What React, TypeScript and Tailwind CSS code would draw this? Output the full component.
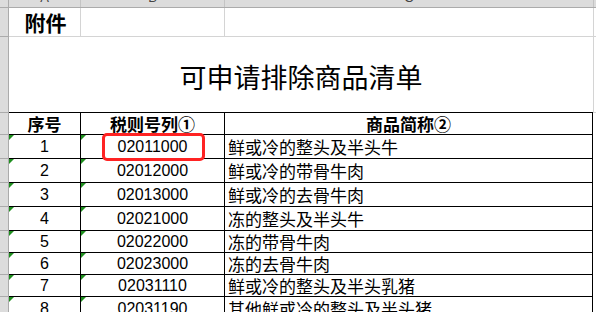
import React from 'react'

const cjk = "font-['Noto_Sans_CJK_SC',sans-serif]"
const num = "font-['Liberation_Sans','Noto_Sans_CJK_SC',sans-serif]"

const rows = [
  { h: 'h-[24px]', no: '1', code: '02011000', name: '鲜或冷的整头及半头牛' },
  { h: 'h-[24px]', no: '2', code: '02012000', name: '鲜或冷的带骨牛肉' },
  { h: 'h-[24px]', no: '3', code: '02013000', name: '鲜或冷的去骨牛肉' },
  { h: 'h-[24px]', no: '4', code: '02021000', name: '冻的整头及半头牛' },
  { h: 'h-[22px]', no: '5', code: '02022000', name: '冻的带骨牛肉' },
  { h: 'h-[22px]', no: '6', code: '02023000', name: '冻的去骨牛肉' },
  { h: 'h-[22px]', no: '7', code: '02031110', name: '鲜或冷的整头及半头乳猪' },
  { h: 'h-[24px]', no: '8', code: '02031190', name: '其他鲜或冷的整头及半头猪' },
]

function Flag() {
  return <span className="absolute left-0 top-0 border-t-[5px] border-r-[5px] border-t-[#1f8f1f] border-r-transparent" />
}

function RowHead() {
  return <div className="w-[9px] shrink-0 bg-[#dcdcdc] border-r border-b border-[#ababab]" />
}

export default function App() {
  return (
    <div className="relative w-[596px] h-[312px] overflow-hidden bg-white text-black">
      {/* column letters, cut off at the top */}
      <div className="flex h-[8px] bg-[#dcdcdc] border-b border-[#ababab] overflow-hidden font-['Liberation_Sans',sans-serif] text-[13px] leading-[13px] text-[#444]">
        <div className="w-[9px] shrink-0 border-r border-[#ababab]" />
        <div className="w-[72px] shrink-0 border-r border-[#c4c4c4] text-center"><span className="block -mt-[9px]">A</span></div>
        <div className="w-[144px] shrink-0 border-r border-[#c4c4c4] text-center"><span className="block -mt-[9px]">B</span></div>
        <div className="w-[369px] shrink-0 border-r border-[#c4c4c4] text-center"><span className="block -mt-[9px]">C</span></div>
        <div className="flex-1" />
      </div>

      {/* 附件 */}
      <div className="flex h-[29px]">
        <RowHead />
        <div className={`w-[72px] shrink-0 border-r border-b border-[#d4d4d4] flex items-center justify-center pl-[2px] ${cjk} text-[21px] leading-[24px] font-bold`}>附件</div>
        <div className="w-[144px] shrink-0 border-r border-b border-[#d4d4d4]" />
        <div className="w-[369px] shrink-0 border-r border-b border-[#d4d4d4]" />
        <div className="flex-1 border-b border-[#d4d4d4]" />
      </div>

      {/* title */}
      <div className="flex h-[76px]">
        <RowHead />
        <div className={`w-[584px] shrink-0 border-b border-black flex items-center justify-center pt-[5px] ${cjk} text-[27px] leading-[32px]`}>可申请排除商品清单</div>
        <div className="w-px shrink-0 bg-[#d4d4d4] border-b border-[#d4d4d4]" />
        <div className="flex-1 border-b border-[#d4d4d4]" />
      </div>

      {/* table head */}
      <div className={`flex h-[22px] ${cjk} text-[17px] leading-[20px] font-bold`}>
        <RowHead />
        <div className="w-[72px] shrink-0 border-r border-b border-black flex items-center justify-center">序号</div>
        <div className="w-[144px] shrink-0 border-r border-b border-black flex items-center justify-center">税则号列①</div>
        <div className="w-[368px] shrink-0 border-r border-b border-black flex items-center justify-center">商品简称②</div>
        <div className="flex-1" />
      </div>

      {rows.map((r) => (
        <div key={r.no} className={`flex ${r.h}`}>
          <RowHead />
          <div className={`relative w-[72px] shrink-0 border-r border-b border-black flex items-center justify-center pt-[1px] ${num} text-[16px] leading-[18px]`}>
            <Flag />
            {r.no}
          </div>
          <div className={`relative w-[144px] shrink-0 border-r border-b border-black flex items-center justify-center pt-[1px] ${num} text-[16px] leading-[18px]`}>
            <Flag />
            {r.code}
          </div>
          <div className={`w-[368px] shrink-0 border-r border-b border-black flex items-center pl-[3px] ${cjk} text-[17px] leading-[20px] whitespace-nowrap`}>{r.name}</div>
          <div className="flex-1" />
        </div>
      ))}

      {/* red mark around the first code */}
      <div className="absolute left-[102px] top-[133px] w-[103px] h-[28px] border-[3px] border-[#ff2323] rounded-[5px]" />
    </div>
  )
}
